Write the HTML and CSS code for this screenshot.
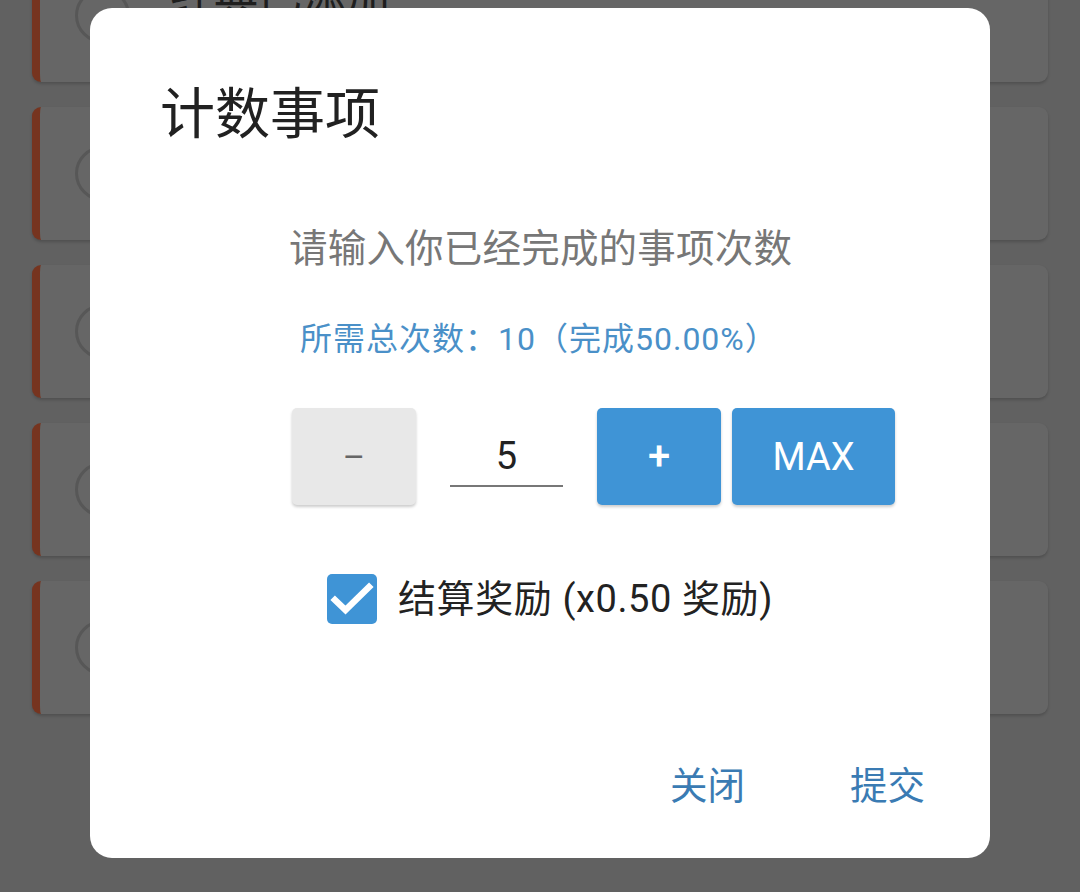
FILE: index.html
```html
<!DOCTYPE html>
<html lang="zh-CN">
<head>
<meta charset="utf-8">
<title>计数事项</title>
<link rel="stylesheet" href="styles.css">
</head>
<body>
<div class="page">
  <div class="list">
    <div class="card"><span class="ring"></span><span class="card-title">经典已添加</span></div>
    <div class="card"><span class="ring"></span><span class="card-title">每日阅读</span></div>
    <div class="card"><span class="ring"></span><span class="card-title">健身打卡</span></div>
    <div class="card"><span class="ring"></span><span class="card-title">背单词</span></div>
    <div class="card"><span class="ring"></span><span class="card-title">早睡早起</span></div>
  </div>
</div>

<div class="scrim">
  <div class="dialog">
    <h1 class="dialog-title">计数事项</h1>
    <div class="dialog-body">
      <p class="prompt">请输入你已经完成的事项次数</p>
      <p class="info">所需总次数：10（完成50.00%）</p>
      <div class="stepper">
        <button class="btn btn-minus">–</button>
        <div class="count-field"><span class="count">5</span></div>
        <button class="btn btn-blue btn-plus">+</button>
        <button class="btn btn-blue btn-max">MAX</button>
      </div>
      <label class="check-row">
        <span class="checkbox">
          <svg viewBox="0 0 50 50" width="50" height="50"><path d="M8 26 L18.5 36 L42 13" fill="none" stroke="#fff" stroke-width="6.5" stroke-linecap="square" stroke-linejoin="miter"/></svg>
        </span>
        <span class="check-label">结算奖励 (x0.50 奖励)</span>
      </label>
    </div>
    <div class="dialog-actions">
      <button class="action">关闭</button>
      <button class="action">提交</button>
    </div>
  </div>
</div>
</body>
</html>
```

FILE: styles.css
```css
* { box-sizing: border-box; }

html, body {
  margin: 0;
  padding: 0;
  width: 1080px;
  height: 892px;
  overflow: hidden;
  background: #616161;
  font-family: "Roboto", "Noto Sans CJK SC", sans-serif;
}

.page {
  width: 1080px;
  height: 892px;
  overflow: hidden;
}

.list {
  margin-top: -51px;
  display: flex;
  flex-direction: column;
  gap: 25px;
  padding: 0 32px;
}

.card {
  height: 133px;
  background: #666666;
  border-left: 8px solid #76341f;
  border-radius: 9px;
  box-shadow: 0 2px 3px rgba(0, 0, 0, 0.18);
  display: flex;
  align-items: center;
  padding-left: 35px;
}

.ring {
  width: 55px;
  height: 55px;
  border: 3px solid #575757;
  border-radius: 50%;
  flex: none;
}

.card-title {
  margin-left: 40px;
  margin-top: -38px;
  font-size: 44px;
  line-height: 50px;
  color: #1e1e1e;
}

.scrim {
  position: fixed;
  inset: 0;
  display: flex;
  justify-content: center;
  align-items: flex-start;
  padding-top: 8px;
}

.dialog {
  width: 900px;
  height: 850px;
  background: #ffffff;
  border-radius: 22px;
  padding: 73px 65px 0 70px;
  display: flex;
  flex-direction: column;
}

.dialog-title {
  margin: 0;
  font-size: 55px;
  line-height: 66px;
  font-weight: 400;
  color: #212121;
}

.dialog-body {
  padding-left: 130px;
  display: flex;
  flex-direction: column;
  align-items: flex-start;
}

.prompt {
  margin: 79px 0 0 -1px;
  font-size: 38.5px;
  line-height: 46px;
  letter-spacing: 0.2px;
  color: #777777;
  white-space: nowrap;
}

.info {
  margin: 47px 0 0 10px;
  font-size: 32px;
  line-height: 40px;
  letter-spacing: 1px;
  color: #4a90c8;
  white-space: nowrap;
}

.stepper {
  margin: 49px 0 0 2px;
  display: flex;
  align-items: flex-start;
}

.btn {
  border: none;
  border-radius: 5px;
  height: 97px;
  padding: 0;
  font-family: "Roboto", "Noto Sans CJK SC", sans-serif;
  box-shadow: 0 2px 3px rgba(0, 0, 0, 0.2);
}

.btn-minus {
  width: 124px;
  background: #e8e8e8;
  color: #666666;
  font-size: 34px;
}

.count-field {
  margin-left: 34px;
  width: 113px;
  height: 79px;
  border-bottom: 2px solid #777777;
  padding-top: 19px;
  text-align: center;
}

.count {
  display: block;
  font-size: 38px;
  line-height: 58px;
  color: #222222;
}

.btn-blue {
  background: #3f94d6;
  color: #ffffff;
}

.btn-plus {
  margin-left: 34px;
  width: 124px;
  font-size: 40px;
  font-weight: 500;
}

.btn-max {
  margin-left: 11px;
  width: 163px;
  font-size: 38px;
}

.check-row {
  margin: 69px 0 0 37px;
  display: flex;
  align-items: center;
  gap: 21px;
}

.checkbox {
  width: 50px;
  height: 50px;
  border-radius: 5px;
  background: #3f94d6;
  display: block;
}

.checkbox svg { display: block; }

.check-label {
  font-size: 38px;
  line-height: 50px;
  letter-spacing: 0.6px;
  color: #222222;
  white-space: nowrap;
}

.dialog-actions {
  margin-top: 139px;
  display: flex;
  justify-content: flex-end;
  gap: 105px;
}

.action {
  border: none;
  background: none;
  padding: 0;
  font-family: "Roboto", "Noto Sans CJK SC", sans-serif;
  font-size: 37.5px;
  line-height: 46px;
  color: #3a7bb3;
}
```
